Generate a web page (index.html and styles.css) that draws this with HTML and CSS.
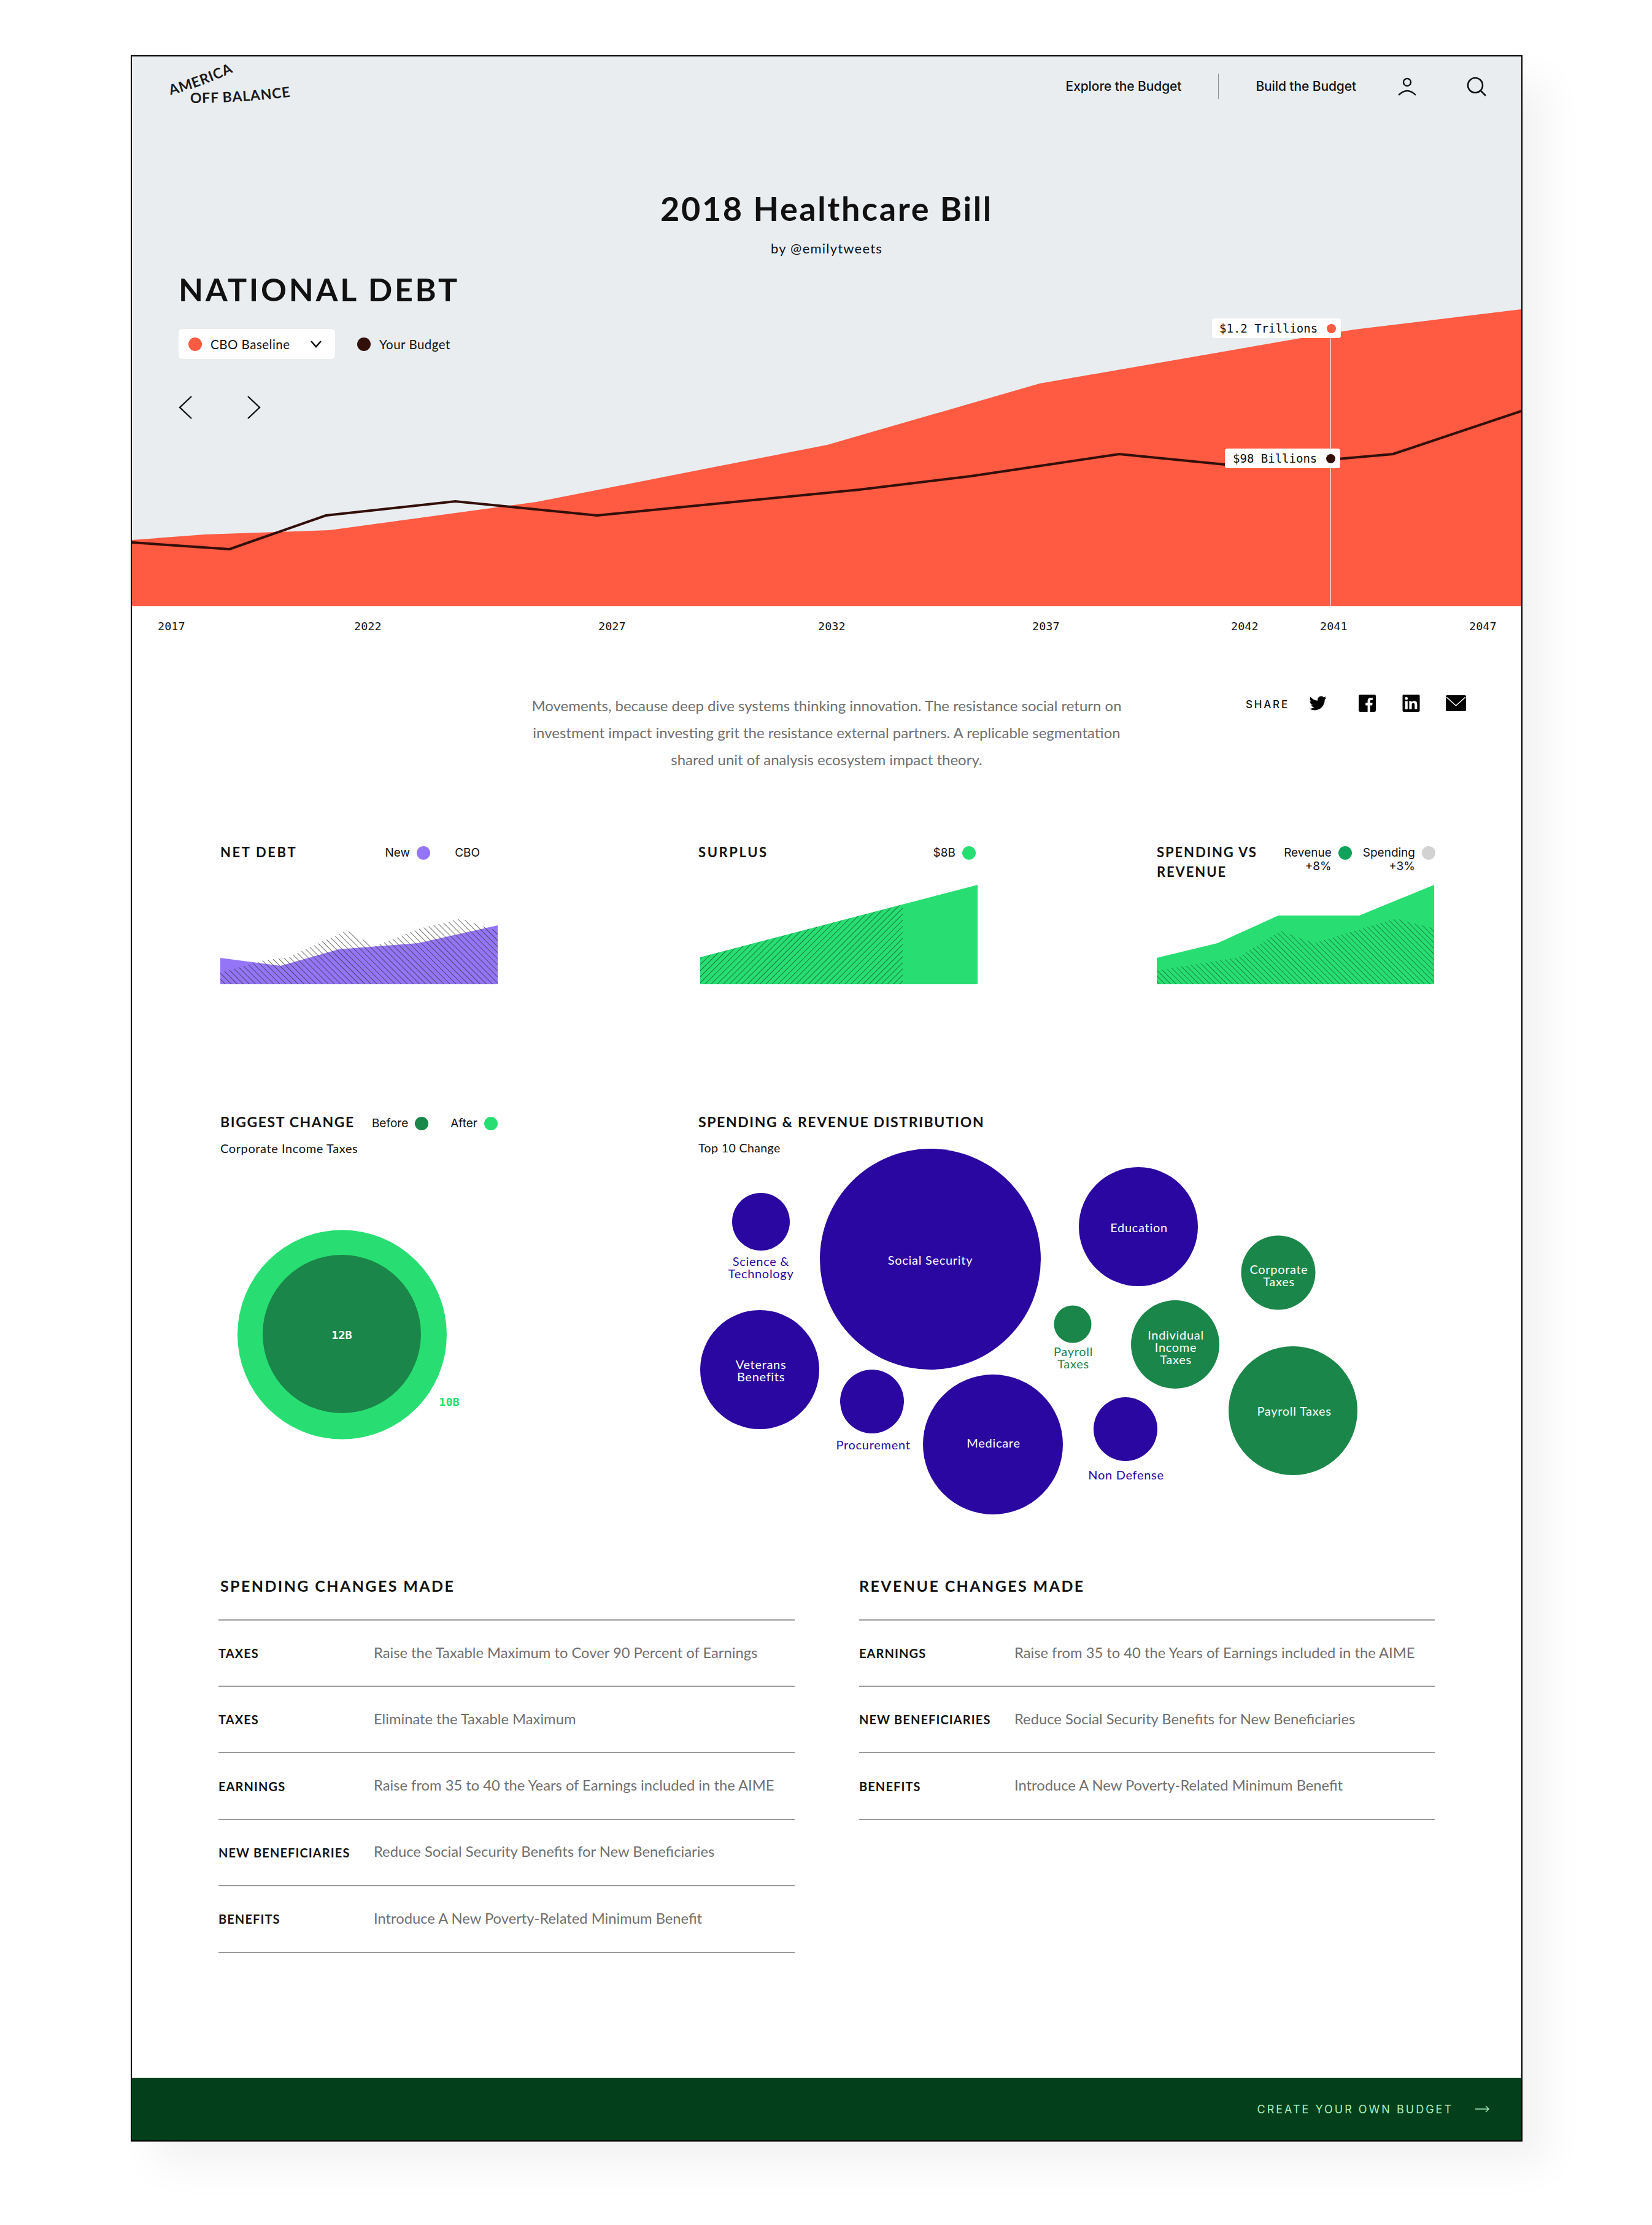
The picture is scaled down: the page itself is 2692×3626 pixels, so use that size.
FILE: index.html
```html
<!DOCTYPE html>
<html lang="en">
<head>
    <meta charset="UTF-8">
    <title>2018 Healthcare Bill</title>
    <link rel="stylesheet" href="styles.css">
</head>
<body>
    <div class="frame">
        <section class="hero">
            <svg class="hero-chart" viewBox="215 92 2264 896">
                <polygon fill="#ff5a42" points="215,880 334,871 537,864 874,818 1348,725 1694,625 2120,551 2207,537 2479,504 2479,988 215,988"/>
                <polyline fill="none" stroke="#330f0a" stroke-width="4" points="215,884 374,895 531,840 742,817 973,840 1400,798 1582,776 1824,740 1996,757 2168,749 2270,740 2479,670"/>
                <line x1="2168" y1="551" x2="2168" y2="988" stroke="#fff" stroke-width="1.5" opacity=".8"/>
            </svg>
            <div class="tip tip-top">$1.2 Trillions <i class="dot dot-orange"></i></div>
            <div class="tip tip-bottom">$98 Billions <i class="dot dot-dark"></i></div>

            <header class="topbar">
                <svg class="logo" viewBox="0 0 200 70">
                    <path id="logo-top" d="M0 50 Q52 36 112 8" fill="none"/>
                    <path id="logo-bottom" d="M32 63 Q112 63 200 52" fill="none"/>
                    <text class="logo-text"><textPath href="#logo-top">AMERICA</textPath></text>
                    <text class="logo-text"><textPath href="#logo-bottom">OFF BALANCE</textPath></text>
                </svg>
                <nav class="nav">
                    <a class="nav-link">Explore the Budget</a>
                    <span class="nav-line"></span>
                    <a class="nav-link">Build the Budget</a>
                    <svg class="icon-user" viewBox="0 0 30 30" fill="none" stroke="#111" stroke-width="2.4">
                        <circle cx="15" cy="8" r="6"/>
                        <path d="M1 29 Q15 15 29 29"/>
                    </svg>
                    <svg class="icon-search" viewBox="0 0 32 32" fill="none" stroke="#111" stroke-width="2.6">
                        <circle cx="14" cy="14" r="12"/>
                        <path d="M23 23 L31 31"/>
                    </svg>
                </nav>
            </header>

            <h1 class="title">2018 Healthcare Bill</h1>
            <p class="byline">by @emilytweets</p>

            <h2 class="debt-title">NATIONAL DEBT</h2>
            <div class="legend">
                <div class="pill">
                    <i class="dot dot-orange"></i>
                    <span>CBO Baseline</span>
                    <svg class="chev" viewBox="0 0 18 12" fill="none" stroke="#111" stroke-width="2.6"><path d="M1 1 L9 10 L17 1"/></svg>
                </div>
                <div class="legend-item"><i class="dot dot-dark"></i><span>Your Budget</span></div>
            </div>
            <div class="arrows">
                <svg viewBox="0 0 22 38" fill="none" stroke="#111" stroke-width="2.4"><path d="M21 1 L2 19 L21 37"/></svg>
                <svg viewBox="0 0 22 38" fill="none" stroke="#111" stroke-width="2.4"><path d="M1 1 L20 19 L1 37"/></svg>
            </div>
        </section>

        <div class="axis">
            <span>2017</span><span>2022</span><span>2027</span><span>2032</span><span>2037</span><span>2042</span><span>2041</span><span>2047</span>
        </div>

        <section class="intro">
            <div></div>
            <p>Movements, because deep dive systems thinking innovation. The resistance social return on<br>
            investment impact investing grit the resistance external partners. A replicable segmentation<br>
            shared unit of analysis ecosystem impact theory.</p>
            <div class="share">
                <span class="share-label">SHARE</span>
                <svg class="share-tw" viewBox="0 0 24 24"><path d="M23.953 4.57a10 10 0 01-2.825.775 4.958 4.958 0 002.163-2.723c-.951.555-2.005.959-3.127 1.184a4.92 4.92 0 00-8.384 4.482C7.69 8.095 4.067 6.13 1.64 3.162a4.822 4.822 0 00-.666 2.475c0 1.71.87 3.213 2.188 4.096a4.904 4.904 0 01-2.228-.616v.06a4.923 4.923 0 003.946 4.827 4.996 4.996 0 01-2.212.085 4.936 4.936 0 004.604 3.417 9.867 9.867 0 01-6.102 2.105c-.39 0-.779-.023-1.17-.067a13.995 13.995 0 007.557 2.209c9.053 0 13.998-7.496 13.998-13.985 0-.21 0-.42-.015-.63A9.935 9.935 0 0024 4.59z"/></svg>
                <svg class="share-fb" viewBox="0 0 24 24"><path d="M22 0H2a2 2 0 00-2 2v20a2 2 0 002 2h10.5v-9H9.6v-3.5h2.9V9c0-3 1.8-4.6 4.4-4.6 1.3 0 2.4.1 2.7.1v3.1h-1.9c-1.4 0-1.7.7-1.7 1.7v2.2h3.4l-.4 3.5h-3V24H22a2 2 0 002-2V2a2 2 0 00-2-2z"/></svg>
                <svg class="share-li" viewBox="0 0 24 24"><path d="M20.447 20.452h-3.554v-5.569c0-1.328-.027-3.037-1.852-3.037-1.853 0-2.136 1.445-2.136 2.939v5.667H9.351V9h3.414v1.561h.046c.477-.9 1.637-1.85 3.37-1.85 3.601 0 4.267 2.37 4.267 5.455v6.286zM5.337 7.433c-1.144 0-2.063-.926-2.063-2.065 0-1.138.92-2.063 2.063-2.063 1.14 0 2.064.925 2.064 2.063 0 1.139-.925 2.065-2.064 2.065zm1.782 13.019H3.555V9h3.564v11.452zM22.225 0H1.771C.792 0 0 .774 0 1.729v20.542C0 23.227.792 24 1.771 24h20.451C23.2 24 24 23.227 24 22.271V1.729C24 .774 23.2 0 22.222 0h.003z"/></svg>
                <svg class="share-mail" viewBox="0 0 33 26"><rect width="33" height="26" rx="2"/><path d="M1 3 L16.500 17 L32 3" fill="none" stroke="#fff" stroke-width="1.6"/></svg>
            </div>
        </section>

        <svg width="0" height="0" class="defs">
            <defs>
                <pattern id="hatch-back" width="7" height="7" patternUnits="userSpaceOnUse" patternTransform="rotate(-45)">
                    <line x1="0" y1="0" x2="0" y2="7" stroke="#222" stroke-width="1.300"/>
                </pattern>
                <pattern id="hatch-fwd" width="7" height="7" patternUnits="userSpaceOnUse" patternTransform="rotate(45)">
                    <line x1="0" y1="0" x2="0" y2="7" stroke="#0a3f20" stroke-width="1.300"/>
                </pattern>
                <pattern id="hatch-green" width="6.500" height="6.500" patternUnits="userSpaceOnUse" patternTransform="rotate(-45)">
                    <line x1="0" y1="0" x2="0" y2="6.500" stroke="#0a5a2c" stroke-width="1.300"/>
                </pattern>
            </defs>
        </svg>

        <section class="charts">
            <div class="card">
                <div class="card-head">
                    <h3 class="card-title">NET DEBT</h3>
                    <div class="keys">
                        <span class="key">New <i class="dot dot-violet"></i></span>
                        <span class="key key-plain">CBO</span>
                    </div>
                </div>
                <svg class="area" viewBox="359 1441 452 163">
                    <polygon fill="#9575f7" points="359,1561 457,1574 552,1547 681,1537 811,1508 811,1604 359,1604"/>
                    <polygon fill="url(#hatch-back)" points="359,1585 430,1565 470,1560 565,1516 610,1542 685,1513 751,1497 797,1513 811,1517 811,1604 359,1604"/>
                </svg>
            </div>
            <div class="card">
                <div class="card-head">
                    <h3 class="card-title">SURPLUS</h3>
                    <div class="keys">
                        <span class="key">$8B <i class="dot dot-bright"></i></span>
                    </div>
                </div>
                <svg class="area" viewBox="1141 1441 452 163">
                    <polygon fill="#28de72" points="1141,1560 1593,1442 1593,1604 1141,1604"/>
                    <polygon fill="url(#hatch-fwd)" points="1141,1560 1471,1474 1471,1604 1141,1604"/>
                </svg>
            </div>
            <div class="card">
                <div class="card-head">
                    <h3 class="card-title card-title-wrap">SPENDING VS REVENUE</h3>
                    <div class="keys keys-stack">
                        <span class="key"><span class="key-text">Revenue<br>+8%</span> <i class="dot dot-mid"></i></span>
                        <span class="key"><span class="key-text">Spending<br>+3%</span> <i class="dot dot-grey"></i></span>
                    </div>
                </div>
                <svg class="area" viewBox="1885 1441 452 163">
                    <polygon fill="#28de72" points="1885,1561 1984,1537 2083,1492 2215,1492 2337,1442 2337,1604 1885,1604"/>
                    <polygon fill="url(#hatch-green)" points="1885,1582 2018,1560 2087,1517 2141,1537 2274,1497 2337,1513 2337,1604 1885,1604"/>
                </svg>
            </div>
        </section>

        <section class="dist">
            <div class="change">
                <div class="card-head card-head-low">
                    <h3 class="card-title card-title-big">BIGGEST CHANGE</h3>
                    <div class="keys keys-change">
                        <span class="key">Before <i class="dot dot-green"></i></span>
                        <span class="key">After <i class="dot dot-bright"></i></span>
                    </div>
                </div>
                <p class="sub">Corporate Income Taxes</p>
                <svg class="ring" viewBox="359 2000 400 350">
                    <circle cx="557.500" cy="2175" r="170.500" fill="#28de72"/>
                    <circle cx="557" cy="2174" r="129" fill="#1b8649"/>
                    <text class="ring-label ring-white" x="557" y="2182">12B</text>
                    <text class="ring-label ring-bright" x="732" y="2291">10B</text>
                </svg>
            </div>
            <div class="bubbles">
                <h3 class="card-title card-title-big">SPENDING &amp; REVENUE DISTRIBUTION</h3>
                <p class="sub sub-short">Top 10 Change</p>
                <svg class="bubble-map" viewBox="1130 1863 1100 610">
                    <g fill="#2a07a0">
                        <circle cx="1516" cy="2052" r="180"/>
                        <circle cx="1855" cy="1999" r="97"/>
                        <circle cx="1240" cy="1991" r="47"/>
                        <circle cx="1238" cy="2232" r="97"/>
                        <circle cx="1421" cy="2284" r="52"/>
                        <circle cx="1618" cy="2354" r="114"/>
                        <circle cx="1834" cy="2329" r="52"/>
                    </g>
                    <g fill="#1b8649">
                        <circle cx="2083" cy="2074" r="60.500"/>
                        <circle cx="1748" cy="2158" r="30.500"/>
                        <circle cx="1915" cy="2191" r="72"/>
                        <circle cx="2107" cy="2299" r="105"/>
                    </g>
                    <g class="bubble-text bubble-white">
                        <text x="1516" y="2061">Social Security</text>
                        <text x="1856" y="2008">Education</text>
                        <text x="1240" y="2231">Veterans</text>
                        <text x="1240" y="2251">Benefits</text>
                        <text x="1619" y="2359">Medicare</text>
                        <text x="2084" y="2076">Corporate</text>
                        <text x="2084" y="2096">Taxes</text>
                        <text x="1916" y="2183">Individual</text>
                        <text x="1916" y="2203">Income</text>
                        <text x="1916" y="2223">Taxes</text>
                        <text x="2109" y="2307">Payroll Taxes</text>
                    </g>
                    <g class="bubble-text bubble-purple">
                        <text x="1240" y="2063">Science &amp;</text>
                        <text x="1240" y="2083">Technology</text>
                        <text x="1423" y="2362">Procurement</text>
                        <text x="1835" y="2411">Non Defense</text>
                    </g>
                    <g class="bubble-text bubble-green">
                        <text x="1749" y="2210">Payroll</text>
                        <text x="1749" y="2230">Taxes</text>
                    </g>
                </svg>
            </div>
        </section>

        <section class="changes">
            <div class="change-list">
                <h3 class="list-title list-title-inset">SPENDING CHANGES MADE</h3>
                <div class="row"><b>TAXES</b><span>Raise the Taxable Maximum to Cover 90 Percent of Earnings</span></div>
                <div class="row"><b>TAXES</b><span>Eliminate the Taxable Maximum</span></div>
                <div class="row"><b>EARNINGS</b><span>Raise from 35 to 40 the Years of Earnings included in the AIME</span></div>
                <div class="row"><b>NEW BENEFICIARIES</b><span>Reduce Social Security Benefits for New Beneficiaries</span></div>
                <div class="row"><b>BENEFITS</b><span>Introduce A New Poverty-Related Minimum Benefit</span></div>
            </div>
            <div class="change-list">
                <h3 class="list-title">REVENUE CHANGES MADE</h3>
                <div class="row"><b>EARNINGS</b><span>Raise from 35 to 40 the Years of Earnings included in the AIME</span></div>
                <div class="row"><b>NEW BENEFICIARIES</b><span>Reduce Social Security Benefits for New Beneficiaries</span></div>
                <div class="row"><b>BENEFITS</b><span>Introduce A New Poverty-Related Minimum Benefit</span></div>
            </div>
        </section>

        <footer class="cta">
            <span>CREATE YOUR OWN BUDGET</span>
            <svg viewBox="0 0 23 12" fill="none" stroke="#a8f0bd" stroke-width="1.4"><path d="M0 6 H22 M17 1 L22 6 L17 11"/></svg>
        </footer>
    </div>
</body>
</html>
```

FILE: styles.css
```css
:root {
    --mist: #e9edf0;
    --orange: #ff5a42;
    --dark: #330f0a;
    --purple: #2a07a0;
    --green: #1b8649;
    --bright: #28de72;
    --text-grey: #6f6f6f;
    --mono: "DejaVu Sans Mono", monospace;
}

* {
    margin: 0;
    padding: 0;
    box-sizing: border-box;
}

body {
    background: #fff;
    color: #111;
    font-family: "Lato", sans-serif;
}

.frame {
    display: flex;
    flex-direction: column;
    width: 2268px;
    height: 3400px;
    margin: 90px 0 136px 213px;
    background: #fff;
    border: 2px solid #000;
    box-shadow: 40px 40px 60px rgba(0, 0, 0, 0.05);
}

/* hero */
.hero {
    position: relative;
    height: 896px;
    padding-left: 76px;
    background: var(--mist);
}

.hero > *:not(.hero-chart) {
    position: relative;
}

.hero > .hero-chart {
    position: absolute;
    top: 0;
    left: 0;
    width: 100%;
    height: 100%;
}

.hero > .tip {
    position: absolute;
    display: flex;
    justify-content: space-between;
    align-items: center;
    height: 32px;
    padding: 0 8px 0 12px;
    background: #fff;
    border-radius: 4px;
    font: 19px var(--mono);
}

.hero > .tip-top {
    left: 1760px;
    top: 427px;
    width: 210px;
}

.hero > .tip-bottom {
    left: 1781px;
    top: 639px;
    width: 188px;
    padding-left: 13px;
}

.dot {
    display: inline-block;
    flex: none;
    width: 22px;
    height: 22px;
    border-radius: 50%;
}

.tip .dot {
    width: 15px;
    height: 15px;
}

.dot-orange { background: var(--orange); }
.dot-dark { background: var(--dark); }
.dot-violet { background: #9575f7; }
.dot-bright { background: var(--bright); }
.dot-mid { background: #0fa25a; }
.dot-grey { background: #d2d2d2; }
.dot-green { background: var(--green); }

.topbar {
    display: flex;
    justify-content: space-between;
    align-items: center;
    height: 96px;
    margin-left: -13px;
    padding-right: 57px;
}

.logo {
    width: 200px;
    height: 70px;
    overflow: visible;
}

.logo-text {
    font: 700 23px "Lato", sans-serif;
    letter-spacing: 0.9px;
    fill: #1a1a1a;
}

.nav {
    display: flex;
    align-items: center;
}

.nav-link {
    font: 500 21px "Inter", sans-serif;
    letter-spacing: -0.1px;
}

.nav-line {
    width: 1px;
    height: 41px;
    margin: 0 60px;
    background: #8b9094;
}

.icon-user {
    width: 30px;
    height: 30px;
    margin: 2px 0 0 68px;
}

.icon-search {
    width: 32px;
    height: 32px;
    margin: 2px 0 0 82px;
}

.title {
    margin-top: 122px;
    margin-left: -76px;
    font-size: 54px;
    line-height: 60px;
    font-weight: 700;
    letter-spacing: 2.6px;
    text-align: center;
}

.byline {
    margin-top: 21px;
    margin-left: -76px;
    font-size: 22px;
    line-height: 28px;
    letter-spacing: 1.2px;
    text-align: center;
}

.debt-title {
    margin-top: 22px;
    font-size: 52px;
    line-height: 60px;
    font-weight: 700;
    letter-spacing: 3.700px;
}

.legend {
    display: flex;
    align-items: center;
    gap: 36px;
    margin-top: 35px;
    font: 20.500px "Lato", sans-serif;
    letter-spacing: 0.5px;
}

.pill {
    display: flex;
    align-items: center;
    width: 255px;
    height: 49px;
    padding: 0 22px 0 16px;
    background: #fff;
    border-radius: 6px;
}

.pill span {
    margin-left: 14px;
    flex: 1;
}

.chev {
    width: 18px;
    height: 12px;
}

.legend-item {
    display: flex;
    align-items: center;
    gap: 14px;
}

.arrows {
    display: flex;
    gap: 90px;
    margin-top: 60px;
}

.arrows svg {
    width: 22px;
    height: 38px;
}

/* years under the chart */
.axis {
    display: grid;
    grid-template-columns: 320px 398px 358px 349px 324px 145px 243px 1fr;
    height: 46px;
    padding: 20px 0 0 42px;
    font: 18.500px/26px var(--mono);
}

/* intro */
.intro {
    display: grid;
    grid-template-columns: 1fr 1040px 1fr;
    margin-top: 94px;
}

.intro p {
    font-size: 24px;
    line-height: 44px;
    color: var(--text-grey);
    text-align: center;
}

.share {
    display: flex;
    align-items: flex-start;
    justify-content: flex-end;
    padding-right: 90px;
}

.share svg {
    flex: none;
    height: 28px;
    margin-top: 4px;
}

.share-label {
    margin: 8px 30px 0 0;
    font: 500 17px/24px "Inter", sans-serif;
    letter-spacing: 2.8px;
}

.share-tw { width: 33px; }
.share-fb { width: 30px; margin-left: 49px; }
.share-li { width: 29px; margin-left: 42px; }
.share-mail { width: 33px; margin-left: 42px; }

.defs {
    position: absolute;
}

/* small charts */
.charts {
    display: grid;
    grid-template-columns: 779px 747px 452px;
    margin-top: 113px;
    padding-left: 144px;
}

.card {
    width: 452px;
}

.card-head {
    display: flex;
    justify-content: space-between;
    height: 68px;
}

.card-head-low {
    height: 28px;
}

.card-title {
    font-size: 22px;
    line-height: 32px;
    font-weight: 700;
    letter-spacing: 2.6px;
}

.card-title-big {
    font-size: 23px;
    line-height: 28px;
    letter-spacing: 1.6px;
}

.card-title-wrap {
    width: 190px;
    letter-spacing: 1.9px;
}

.keys {
    display: flex;
    gap: 40px;
}

.key {
    display: flex;
    gap: 11px;
    margin-top: 6px;
    font: 19px/22px "Inter", sans-serif;
}

.key-plain {
    margin-right: 29px;
}

.keys-stack {
    gap: 18px;
    margin-right: -2px;
}

.key-text {
    text-align: right;
}

.area {
    display: block;
    width: 452px;
    height: 163px;
}

.card:nth-child(2) .area {
    margin-left: 3px;
}

/* biggest change and bubbles */
.dist {
    display: grid;
    grid-template-columns: 779px 1fr;
    margin-top: 210px;
    padding-left: 144px;
}

.change {
    width: 452px;
}

.keys-change {
    gap: 36px;
}

.sub {
    margin-top: 16px;
    font: 20px/26px "Lato", sans-serif;
    letter-spacing: 0.6px;
}

.sub-short {
    font-size: 19.500px;
    letter-spacing: 0.4px;
}

.ring {
    display: block;
    width: 400px;
    height: 350px;
    margin-top: 116px;
}

.ring-label {
    font: 700 18.500px var(--mono);
    text-anchor: middle;
}

.ring-white { fill: #fff; }
.ring-bright { fill: var(--bright); }

.bubble-map {
    display: block;
    width: 1100px;
    height: 610px;
    margin: -21px 0 0 -8px;
}

.bubble-text {
    font: 20px "Lato", sans-serif;
    letter-spacing: 0.7px;
    text-anchor: middle;
}

.bubble-white { fill: #fff; }
.bubble-purple { fill: var(--purple); }
.bubble-green { fill: var(--green); }

/* changes lists */
.changes {
    display: grid;
    grid-template-columns: 939px 938px;
    gap: 105px;
    margin-top: 96px;
    padding-left: 141px;
}

.list-title {
    height: 70px;
    font-size: 25px;
    line-height: 30px;
    font-weight: 700;
    letter-spacing: 2.4px;
}

.list-title-inset {
    padding-left: 3px;
}

.row {
    display: grid;
    grid-template-columns: 253px 1fr;
    align-items: center;
    height: 108.400px;
    border-bottom: 2px solid #9c9c9c;
}

.list-title + .row {
    height: 110px;
    border-top: 2px solid #9c9c9c;
}

.row b {
    font-size: 20px;
    letter-spacing: 1.1px;
}

.row span {
    margin-bottom: 3px;
    font-size: 23.750px;
    color: var(--text-grey);
}

/* bottom bar */
.cta {
    display: flex;
    justify-content: flex-end;
    align-items: center;
    gap: 36px;
    height: 102px;
    margin-top: auto;
    padding-right: 52px;
    background: #033f1b;
    color: #a8f0bd;
    font: 18px "Inter", sans-serif;
    letter-spacing: 3px;
}

.cta svg {
    width: 23px;
    height: 12px;
}
```
